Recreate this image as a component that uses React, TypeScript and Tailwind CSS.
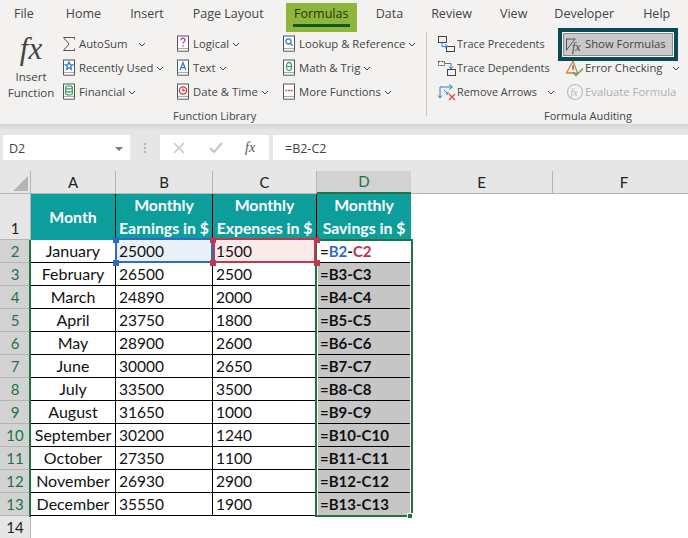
import React from "react";

const UI = "font-['Open_Sans','Noto_Sans',sans-serif]";

function Chevron({ className = "" }: { className?: string }) {
  return (
    <svg width="8" height="5" viewBox="0 0 8 5" className={className} fill="none" stroke="#444" strokeWidth="1">
      <path d="M1 1l3 3 3-3" />
    </svg>
  );
}

function Book({ color, children }: { color: string; children?: React.ReactNode }) {
  return (
    <svg width="14" height="18" viewBox="0 0 14 18" className="shrink-0">
      <rect x="1.500" y="1" width="11" height="13" fill="#fff" stroke="#555" />
      <path d="M1.500 14v2.200h11V14" fill="#fff" stroke="#555" />
      <g stroke={color} fill="none" strokeWidth="1.300">{children}</g>
    </svg>
  );
}

const Logical = () => (
  <Book color="#b146c2">
    <path d="M5 5.200c0-2.600 4-2.600 4 0 0 1.600-2 1.600-2 3.600" />
    <path d="M7 10v1.600" />
  </Book>
);
const TextI = () => (
  <Book color="#2a7fd6">
    <path d="M4.200 11L7 3.500 9.800 11M5.200 8.600h3.600" />
  </Book>
);
const DateI = () => (
  <Book color="#d13438">
    <circle cx="7" cy="7.500" r="3.600" />
    <path d="M7 5.500v2h2" />
  </Book>
);
const Lookup = () => (
  <Book color="#2a7fd6">
    <circle cx="6.400" cy="6.400" r="2.600" />
    <path d="M8.400 8.400l2.200 2.400" />
  </Book>
);
const MathI = () => (
  <Book color="#3fa364">
    <ellipse cx="7" cy="7.500" rx="2.600" ry="4" />
    <path d="M4.500 7.500h5" />
  </Book>
);
const More = () => (
  <Book color="#d13438">
    <path d="M3.500 7.500h1.600M6.200 7.500h1.600M8.900 7.500h1.600" strokeWidth="1.600" />
  </Book>
);
const Recent = () => (
  <Book color="#2a7fd6">
    <path d="M7 3l1.100 2.600 2.700.2-2.100 1.800.7 2.700L7 8.800l-2.400 1.500.7-2.700-2.100-1.800 2.700-.2z" />
  </Book>
);
const Financial = () => (
  <Book color="#3fa364">
    <ellipse cx="7" cy="4.400" rx="3.400" ry="1.500" />
    <path d="M3.600 4.400v6.200c0 2 6.800 2 6.800 0V4.400M3.600 7.500c0 2 6.800 2 6.800 0" />
  </Book>
);
const Sigma = () => (
  <svg width="14" height="16" viewBox="0 0 14 16" className="shrink-0" fill="none" stroke="#555" strokeWidth="1">
    <path d="M12.500 3.500V1.500H1.500L7 8l-5.500 6.500h11v-2" />
  </svg>
);

const TracePrec = () => (
  <svg width="19" height="18" viewBox="0 0 19 18" className="shrink-0" fill="none">
    <rect x="1.500" y="1.500" width="8" height="6" stroke="#444" />
    <rect x="9.500" y="11.500" width="8" height="5" stroke="#444" />
    <path d="M5 8v3.500h6" stroke="#2a7fd6" />
    <path d="M8 9l3 2.500-3 1.500" stroke="#2a7fd6" />
  </svg>
);
const TraceDep = () => (
  <svg width="19" height="18" viewBox="0 0 19 18" className="shrink-0" fill="none">
    <rect x="1.500" y="2.500" width="6" height="4" stroke="#444" strokeDasharray="2 1" />
    <rect x="10.500" y="10.500" width="8" height="6" stroke="#444" />
    <path d="M8 4.500h6v5" stroke="#2a7fd6" />
    <path d="M12 7.500l2 2.500 2-2.500" stroke="#2a7fd6" />
  </svg>
);
const RemoveArrows = () => (
  <svg width="19" height="18" viewBox="0 0 19 18" className="shrink-0" fill="none">
    <path d="M3 15V4h12M12 1.500L15.500 4 12 6.500M1 12.500L3 15l2-2.500" stroke="#2a7fd6" />
    <path d="M7 7l4 4M9 11h2V9" stroke="#2a7fd6" />
    <path d="M12 11l6 6M18 11l-6 6" stroke="#e8453c" strokeWidth="1.200" />
  </svg>
);
const ErrorCheck = () => (
  <svg width="19" height="18" viewBox="0 0 19 18" className="shrink-0" fill="none">
    <path d="M8 2L1.500 14h11z" stroke="#d9822b" strokeWidth="1.300" />
    <path d="M8 6v5" stroke="#555" strokeWidth="1.200" />
    <path d="M8 13.500l3 3 7-7" stroke="#3fa364" strokeWidth="1.300" />
  </svg>
);
const EvalF = () => (
  <svg width="18" height="18" viewBox="0 0 18 18" className="shrink-0" fill="none">
    <circle cx="9" cy="9" r="7.500" stroke="#bdbdbd" strokeWidth="1.200" />
    <text x="4.500" y="13" fontSize="10" fontStyle="italic" fontFamily="'Liberation Serif',serif" fill="#b5b5b5">fx</text>
  </svg>
);

function RibbonItem({ icon, label, chevron, gap = "ml-1", disabled, iconBox = "w-[14px]", size = "text-[11.300px]", textGap = "ml-[3px]" }: { icon: React.ReactNode; label: string; chevron?: boolean; gap?: string; disabled?: boolean; iconBox?: string; size?: string; textGap?: string }) {
  return (
    <div className={`flex h-6 items-center whitespace-nowrap ${disabled ? "text-[#b0b0b0]" : "text-[#444]"}`}>
      <div className={`flex justify-center ${iconBox}`}>{icon}</div>
      <span className={`${textGap} ${size}`}>{label}</span>
      {chevron && <Chevron className={gap} />}
    </div>
  );
}

const tabs: [string, string][] = [
  ["File", "ml-[14px]"],
  ["Home", "ml-[32px]"],
  ["Insert", "ml-[29px]"],
  ["Page Layout", "ml-[29px]"],
];
const tabs2: [string, string][] = [
  ["Data", "ml-[19px]"],
  ["Review", "ml-[28px]"],
  ["View", "ml-[28px]"],
  ["Developer", "ml-[27px]"],
  ["Help", "ml-[29px]"],
];

function Ribbon() {
  return (
    <div className={`h-[124px] bg-[#f3f2f1] ${UI}`}>
      <div className="flex h-[32px] items-start text-[12.500px] text-[#444]">
        {tabs.map(([t, m]) => (
          <span key={t} className={`${m} mt-[5px] whitespace-nowrap`}>{t}</span>
        ))}
        <div className="ml-[22px] mt-[3px] flex h-[29px] w-[71px] flex-col items-center bg-[#8fb63b] pt-[3px] font-medium text-[#1c3a1c]">
          <span className="leading-[15px]">Formulas</span>
          <span className="mt-[3px] h-[3px] w-[57px] bg-[#0e5a26]" />
        </div>
        {tabs2.map(([t, m]) => (
          <span key={t} className={`${m} mt-[5px] whitespace-nowrap`}>{t}</span>
        ))}
      </div>
      <div className="flex h-[92px]">
        <div className="flex w-[426px] shrink-0 flex-col">
          <div className="flex h-[76px]">
            <div className="ml-[5px] flex w-[52px] flex-col items-center text-[11.500px] leading-[16px] text-[#444]">
              <span className="h-[35px] font-['Liberation_Serif',serif] text-[31px] italic leading-[33px] text-[#444]">fx</span>
              <span className="mt-[2px]">Insert</span>
              <span>Function</span>
            </div>
            <div className="ml-[5px] flex w-[114px] flex-col">
              <RibbonItem icon={<Sigma />} label="AutoSum" chevron gap="ml-[11px]" />
              <RibbonItem icon={<Recent />} label="Recently Used" chevron gap="ml-[3px]" />
              <RibbonItem icon={<Financial />} label="Financial" chevron gap="ml-[3px]" />
            </div>
            <div className="flex w-[106px] flex-col">
              <RibbonItem icon={<Logical />} label="Logical" chevron gap="ml-[3px]" />
              <RibbonItem icon={<TextI />} label="Text" chevron gap="ml-[3px]" />
              <RibbonItem icon={<DateI />} label="Date & Time" chevron gap="ml-[3px]" />
            </div>
            <div className="flex flex-col">
              <RibbonItem icon={<Lookup />} label="Lookup & Reference" chevron gap="ml-[3px]" />
              <RibbonItem icon={<MathI />} label="Math & Trig" chevron gap="ml-[3px]" />
              <RibbonItem icon={<More />} label="More Functions" chevron gap="ml-[3px]" />
            </div>
          </div>
          <div className="ml-[173px] mt-[1px] text-[11px] leading-[14px] text-[#444]">Function Library</div>
        </div>
        <div className="mb-[8px] w-px bg-[#c8c6c4]" />
        <div className="relative flex flex-1 flex-col">
          <div className="flex h-[76px]">
            <div className="ml-[10px] flex w-[122px] flex-col">
              <RibbonItem icon={<TracePrec />} label="Trace Precedents" iconBox="w-[19px]" size="text-[10.900px]" textGap="ml-px" />
              <RibbonItem icon={<TraceDep />} label="Trace Dependents" iconBox="w-[19px]" size="text-[10.900px]" textGap="ml-px" />
              <RibbonItem icon={<RemoveArrows />} label="Remove Arrows" chevron gap="ml-[10px]" iconBox="w-[19px]" size="text-[10.900px]" textGap="ml-px" />
            </div>
            <div className="ml-[6px] flex flex-col">
              <div className="h-6" />
              <RibbonItem icon={<ErrorCheck />} label="Error Checking" chevron gap="ml-[9px]" iconBox="w-[19px]" textGap="ml-px" />
              <RibbonItem icon={<EvalF />} label="Evaluate Formula" disabled iconBox="w-[19px]" textGap="ml-px" />
            </div>
          </div>
          <div className="ml-[117px] mt-[1px] text-[11px] leading-[14px] text-[#444]">Formula Auditing</div>
          <div className="absolute left-[131px] top-[-4px] flex h-[33px] w-[120px] border-[4px] border-[#0b4a55] bg-white p-px">
            <div className="flex flex-1 items-center whitespace-nowrap border border-[#8a8a8a] bg-[#c9c9c9] text-[11.300px] text-[#444]">
              <svg width="18" height="18" viewBox="0 0 18 18" className="ml-px shrink-0" fill="none">
                <path d="M1.500 3h9M1.500 3v11.500M1.500 14L10 3" stroke="#555" />
                <text x="7" y="15" fontSize="12" fontStyle="italic" fontFamily="'Liberation Serif',serif" fill="#444">fx</text>
              </svg>
              <span className="ml-[2px]">Show Formulas</span>
            </div>
          </div>
        </div>
      </div>
    </div>
  );
}

function FormulaBar() {
  return (
    <div className={`flex h-[47px] items-start bg-gradient-to-b from-[#d4d4d4] from-0% to-[#e6e6e6] to-15% pt-[11px] ${UI} text-[12.500px] text-[#444]`}>
      <div className="ml-[3px] flex h-[25px] w-[127px] items-center justify-between bg-white pl-[6px] pr-[7px] pt-[3px]">
        <span>D2</span>
        <span className="h-0 w-0 border-x-[4px] border-t-[4px] border-x-transparent border-t-[#777]" />
      </div>
      <div className="ml-[14px] mt-[8px] flex w-[3px] flex-col gap-[2px]">
        <span className="h-[2px] w-[2px] bg-[#b0b0b0]" />
        <span className="h-[2px] w-[2px] bg-[#b0b0b0]" />
        <span className="h-[2px] w-[2px] bg-[#b0b0b0]" />
      </div>
      <div className="ml-[13px] flex h-[25px] w-[109px] items-center bg-white">
        <svg width="12" height="12" viewBox="0 0 12 12" className="ml-[13px]" stroke="#c4c4c4" strokeWidth="1.400" fill="none"><path d="M1 1l10 10M11 1L1 11" /></svg>
        <svg width="14" height="12" viewBox="0 0 14 12" className="ml-[24px]" stroke="#c4c4c4" strokeWidth="2" fill="none"><path d="M1 6l4 4 8-9" /></svg>
        <span className="ml-[22px] font-['Liberation_Serif',serif] text-[14px] italic text-[#555]">fx</span>
      </div>
      <div className="ml-[4px] flex h-[25px] flex-1 items-center bg-white pl-[12px] pt-[3px]">=B2-C2</div>
    </div>
  );
}

type Row = [string, string, string];
const rows: Row[] = [
  ["January", "25000", "1500"],
  ["February", "26500", "2500"],
  ["March", "24890", "2000"],
  ["April", "23750", "1800"],
  ["May", "28900", "2600"],
  ["June", "30000", "2650"],
  ["July", "33500", "3500"],
  ["August", "31650", "1000"],
  ["September", "30200", "1240"],
  ["October", "27350", "1100"],
  ["November", "26930", "2900"],
  ["December", "35550", "1900"],
];

const colHead = "flex items-center justify-center border-r border-b border-[#b5b5b5] bg-[#e6e6e6] text-[15px] text-[#222]";
const rowHead = "flex items-center justify-center border-r border-b border-[#b5b5b5] text-[15px]";
const headCell = "flex flex-col items-center justify-center border-r border-black bg-[#0d9e9c] pb-[2px] text-[15.800px] font-bold leading-[23px] text-white";
const cell = "flex items-center border-r border-b border-black text-[#111]";

function Sheet() {
  return (
    <div className="relative grid w-[696px] grid-cols-[31px_85px_97px_104px_94px_142px_143px] grid-rows-[23px_46px_repeat(13,23px)] bg-white font-['Lato','Open_Sans',sans-serif]">
      <div className="flex items-end justify-end border-r border-b border-[#b5b5b5] bg-[#e6e6e6] p-[2px]">
        <span className="h-0 w-0 border-b-[15px] border-l-[15px] border-b-[#b5b5b5] border-l-transparent" />
      </div>
      {["A", "B", "C"].map((c) => <div key={c} className={colHead}>{c}</div>)}
      <div className="flex items-center justify-center border-b-2 border-[#217346] bg-[#d2d2d2] text-[15px] text-[#217346]">D</div>
      {["E", "F"].map((c) => <div key={c} className={colHead}>{c}</div>)}

      <div className={`${rowHead} items-end bg-[#e6e6e6] pb-0 text-[#222]`}>1</div>
      <div className={headCell}><span>Month</span></div>
      <div className={headCell}><span>Monthly</span><span>Earnings in $</span></div>
      <div className={headCell}><span>Monthly</span><span>Expenses in $</span></div>
      <div className={`${headCell} border-r-0`}><span>Monthly</span><span>Savings in $</span></div>
      <div className="col-span-2" />

      {rows.map((r, i) => {
        const n = i + 2;
        return (
          <React.Fragment key={n}>
            <div className={`${rowHead} bg-[#d2d2d2] text-[#217346]`}>{n}</div>
            <div className={`${cell} justify-center text-[16px]`}>{r[0]}</div>
            <div className={`${cell} pl-[3px] pt-[1px] text-[15.500px] ${i === 0 ? "bg-[#ebf0f8]" : ""}`}>{r[1]}</div>
            <div className={`${cell} pl-[3px] pt-[1px] text-[15.500px] ${i === 0 ? "bg-[#fbeaea]" : ""}`}>{r[2]}</div>
            <div className={`${cell} pl-[3px] text-[15px] font-bold ${i === 0 ? "bg-white" : "bg-[#c6c6c6]"}`}>
              {i === 0 ? (
                <span>=<span className="text-[#2f6bc4]">B2</span>-<span className="text-[#c0304a]">C2</span></span>
              ) : (
                <span>{`=B${n}-C${n}`}</span>
              )}
            </div>
            <div className="col-span-2" />
          </React.Fragment>
        );
      })}
      <div className={`${rowHead} bg-[#e6e6e6] text-[#222]`}>14</div>
      <div className="col-span-6" />

      {/* selection and reference overlays */}
      <div className="pointer-events-none absolute left-[29px] top-[69px] h-[277px] w-[2px] bg-[#217346]" />
      <div className="pointer-events-none absolute left-[315px] top-[68px] h-[278px] w-[98px] border-2 border-[#217346]">
        <div className="h-full w-full border-x border-white" />
      </div>
      <div className="absolute left-[407px] top-[342px] h-[6px] w-[6px] border border-white bg-[#217346]" />
      <div className="absolute left-[115px] top-[67px] h-[25px] w-[98px] border-2 border-[#2f6bc4]" />
      <div className="absolute left-[213px] top-[67px] h-[25px] w-[103px] border-2 border-[#c0394b]" />
      <span className="absolute left-[113px] top-[66px] h-[6px] w-[6px] bg-[#2f6bc4]" />
      <span className="absolute left-[113px] top-[89px] h-[6px] w-[6px] bg-[#2f6bc4]" />
      <span className="absolute left-[210px] top-[66px] h-[6px] w-[6px] bg-[#c0394b]" />
      <span className="absolute left-[210px] top-[89px] h-[6px] w-[6px] bg-[#c0394b]" />
      <span className="absolute left-[314px] top-[66px] h-[6px] w-[6px] bg-[#c0394b]" />
      <span className="absolute left-[314px] top-[89px] h-[6px] w-[6px] bg-[#c0394b]" />
    </div>
  );
}

export default function App() {
  return (
    <div className="h-[538px] w-[688px] overflow-hidden bg-white">
      <Ribbon />
      <FormulaBar />
      <Sheet />
    </div>
  );
}
